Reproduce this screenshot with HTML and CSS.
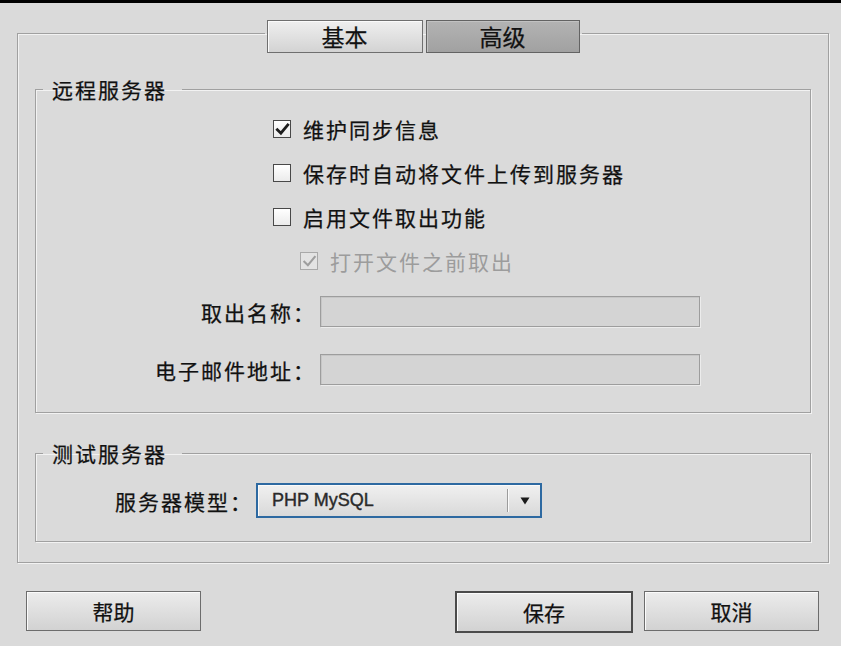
FILE: index.html
```html
<!DOCTYPE html>
<html lang="zh-CN">
<head>
<meta charset="utf-8">
<title>站点设置 - 高级</title>
<link rel="stylesheet" href="styles.css">
</head>
<body>
<div class="topbar"></div>
<fieldset class="panel">
  <legend class="tabs-legend">
    <div class="tabs">
      <div class="tab">基本</div>
      <div class="tab tab-active">高级</div>
    </div>
  </legend>

  <fieldset class="group group-remote">
    <legend class="group-title">远程服务器</legend>
    <div class="checks">
      <div class="check">
        <span class="box"><svg class="tick" viewBox="0 0 16 16"><path d="M2.5 8.2 L6.3 12 L13.6 3.2"/></svg></span>
        <span class="check-text">维护同步信息</span>
      </div>
      <div class="check">
        <span class="box"></span>
        <span class="check-text">保存时自动将文件上传到服务器</span>
      </div>
      <div class="check">
        <span class="box"></span>
        <span class="check-text">启用文件取出功能</span>
      </div>
      <div class="check check-sub">
        <span class="box"><svg class="tick" viewBox="0 0 16 16"><path d="M2.5 8.2 L6.3 12 L13.6 3.2"/></svg></span>
        <span class="check-text">打开文件之前取出</span>
      </div>
    </div>
    <div class="fields">
      <span class="flabel">取出名称<span class="colon">：</span></span>
      <span class="input"></span>
      <span class="flabel">电子邮件地址<span class="colon">：</span></span>
      <span class="input"></span>
    </div>
  </fieldset>

  <fieldset class="group group-test">
    <legend class="group-title">测试服务器</legend>
    <div class="model-row">
      <span class="model-label">服务器模型<span class="colon">：</span></span>
      <div class="select">
        <span class="select-value">PHP MySQL</span>
        <span class="select-divider"></span>
        <span class="select-arrow"><svg viewBox="0 0 10 8" width="10" height="8"><path d="M0.5 0.5 H9.5 L5 7.5 Z"/></svg></span>
      </div>
    </div>
  </fieldset>
</fieldset>

<div class="actions">
  <div class="btn">帮助</div>
  <div class="spacer"></div>
  <div class="btn btn-default">保存</div>
  <div class="btn btn-cancel">取消</div>
</div>
</body>
</html>
```
FILE: styles.css
```css
* { box-sizing: border-box; }

html, body {
  margin: 0;
  padding: 0;
}

body {
  width: 841px;
  height: 646px;
  overflow: hidden;
  background: #dadada;
  color: #111;
  font-family: "Noto Sans CJK SC", "Noto Sans", sans-serif;
  font-size: 21px;
  letter-spacing: 2px;
  -webkit-text-stroke: 0.25px #111;
}

.topbar {
  height: 3px;
  background: #000;
}

/* outer etched panel with tabs in the legend */
.panel {
  margin: 11px 12px 0 17px;
  padding: 0 17px 20px;
  min-width: 0;
  border: 1px solid #a0a0a0;
  box-shadow: 1px 1px 0 #f2f2f2, inset 1px 1px 0 #f2f2f2;
}

.tabs-legend {
  margin: 0 auto;
  padding: 6px 2px 0;
}

.tabs {
  display: flex;
  gap: 3px;
}

.tab {
  width: 156px;
  height: 33px;
  display: flex;
  align-items: center;
  justify-content: center;
  border: 1px solid #6f6f6f;
  background: linear-gradient(#efefef, #d3d3d3);
  box-shadow: inset 1px 1px 0 #fbfbfb;
  font-size: 23px;
  line-height: 1;
  letter-spacing: 0;
}

.tab-active {
  width: 154px;
  border-color: #636363;
  background: linear-gradient(#b3b3b3, #a1a1a1);
  box-shadow: inset 1px 1px 0 #c2c2c2;
}

/* group boxes */
.group {
  margin: 24px 0 0;
  padding: 0 0 27px;
  min-width: 0;
  border: 1px solid #a0a0a0;
  box-shadow: 1px 1px 0 #f2f2f2, inset 1px 1px 0 #f2f2f2;
}

.group-title {
  margin-left: 7px;
  padding: 0 15px 0 9px;
  line-height: 24px;
}

.checks {
  margin: 16px 0 0 237px;
  display: flex;
  flex-direction: column;
  gap: 20px;
}

.check {
  height: 24px;
  display: flex;
  align-items: center;
  gap: 12px;
  line-height: 24px;
}

.box {
  width: 18px;
  height: 18px;
  flex: none;
  border: 1px solid #484848;
  background: linear-gradient(#ffffff, #ebebeb);
  display: flex;
  align-items: center;
  justify-content: center;
}

.tick {
  width: 15px;
  height: 15px;
  fill: none;
  stroke: #1e1e1e;
  stroke-width: 3;
  stroke-linecap: square;
}

.check-sub {
  margin-left: 27px;
  color: #9c9c9c;
  -webkit-text-stroke: 0;
}

.check-sub .box {
  border-color: #a9a9a9;
  background: #e3e3e3;
}

.check-sub .tick {
  stroke: #9e9e9e;
  stroke-width: 2.2;
}

.fields {
  margin-top: 23px;
  display: grid;
  grid-template-columns: 280px 380px;
  column-gap: 4px;
  row-gap: 27px;
  align-items: center;
}

.flabel {
  text-align: right;
}

.colon {
  font-family: "Noto Sans CJK TC", sans-serif;
}

.input {
  height: 31px;
  border: 1px solid #9d9d9d;
  background: #d4d4d4;
  box-shadow: inset 1px 1px 0 #c6c6c6, 1px 1px 0 #ececec;
}

.group-test {
  margin-top: 28px;
  padding-bottom: 23px;
}

.model-row {
  margin: 18px 0 0 79px;
  display: flex;
  align-items: center;
}

.select {
  margin-left: 3px;
  width: 286px;
  height: 35px;
  display: flex;
  align-items: stretch;
  border: 2px solid #2d69a1;
  background: linear-gradient(#f0f0f0, #d9d9d9);
  box-shadow: inset 1px 1px 0 #fafafa;
  font-family: "Liberation Sans", "DejaVu Sans", sans-serif;
  font-size: 18px;
  letter-spacing: 0;
  color: #2a2a2a;
  -webkit-text-stroke: 0.4px #2a2a2a;
}

.select-value {
  flex: 1;
  padding-left: 14px;
  display: flex;
  align-items: center;
}

.select-divider {
  width: 2px;
  margin: 4px 0;
  border-left: 1px solid #9c9c9c;
  border-right: 1px solid #fbfbfb;
}

.select-arrow {
  width: 31px;
  display: flex;
  align-items: center;
  justify-content: center;
}

.select-arrow svg {
  fill: #1a1a1a;
}

/* bottom buttons */
.actions {
  margin: 28px 22px 0 26px;
  display: flex;
  align-items: flex-start;
}

.spacer {
  flex: 1;
}

.btn {
  width: 175px;
  height: 40px;
  display: flex;
  align-items: center;
  justify-content: center;
  border: 1px solid #6c6c6c;
  background: linear-gradient(#ececec, #d2d2d2);
  box-shadow: inset 1px 1px 0 #fbfbfb;
  letter-spacing: 0;
}

.btn-default {
  width: 178px;
  height: 42px;
  border: 2px solid #4b4b4b;
}

.btn-cancel {
  margin-left: 11px;
}
```
